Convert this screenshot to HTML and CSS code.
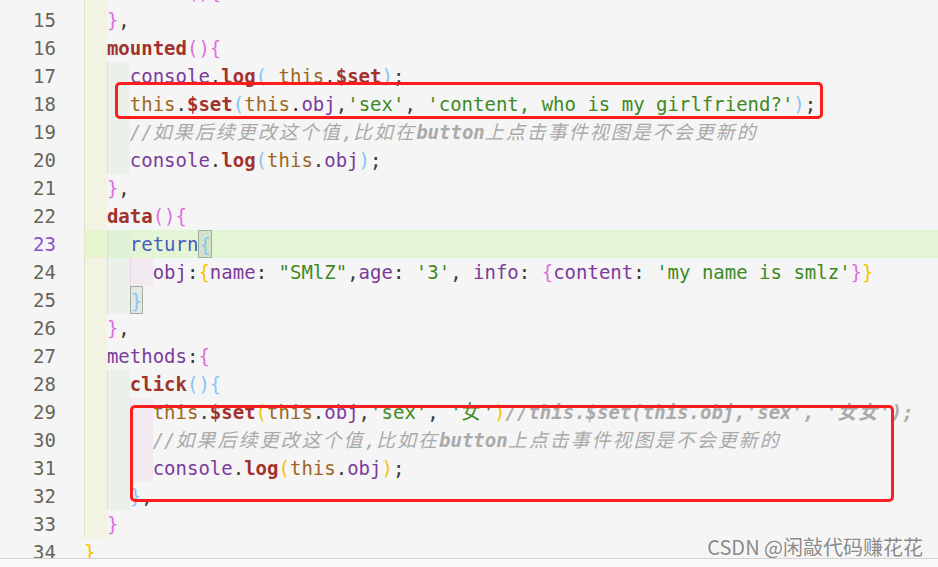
FILE: index.html
```html
<!DOCTYPE html>
<html lang="zh-CN">
<head>
    <meta charset="UTF-8">
    <meta name="viewport" content="width=device-width, initial-scale=1.0">
    <title>Vue $set</title>
    <link rel="stylesheet" href="styles.css">
</head>
<body>
    <div class="editor">
        <div class="lines">
            <div class="row"><span class="ln">14</span><div class="code"><i class="g g1"></i><span class="fn">created</span><span class="b1">(){</span></div></div>
            <div class="row"><span class="ln">15</span><div class="code"><i class="g g1"></i><span class="b1">}</span>,</div></div>
            <div class="row"><span class="ln">16</span><div class="code"><i class="g g1"></i><span class="fn">mounted</span><span class="b1">(){</span></div></div>
            <div class="row"><span class="ln">17</span><div class="code"><i class="g g1"></i><i class="g g2"></i><span class="pr">console</span>.<span class="fn">log</span><span class="b2">(</span> <span class="th">this</span>.<span class="fn">$set</span><span class="b2">)</span>;</div></div>
            <div class="row"><span class="ln">18</span><div class="code"><i class="g g1"></i><i class="g g2"></i><span class="th">this</span>.<span class="fn">$set</span><span class="b2">(</span><span class="th">this</span>.<span class="pr">obj</span>,<span class="st">'sex'</span>, <span class="st">'content, who is my girlfriend?'</span><span class="b2">)</span>;</div></div>
            <div class="row"><span class="ln">19</span><div class="code"><i class="g g1"></i><i class="g g2"></i><span class="cm">//<span class="zh">如果后续更改这个值</span>,<span class="zh">比如在</span><b>button</b><span class="zh">上点击事件视图是不会更新的</span></span></div></div>
            <div class="row"><span class="ln">20</span><div class="code"><i class="g g1"></i><i class="g g2"></i><span class="pr">console</span>.<span class="fn">log</span><span class="b2">(</span><span class="th">this</span>.<span class="pr">obj</span><span class="b2">)</span>;</div></div>
            <div class="row"><span class="ln">21</span><div class="code"><i class="g g1"></i><span class="b1">}</span>,</div></div>
            <div class="row"><span class="ln">22</span><div class="code"><i class="g g1"></i><span class="fn">data</span><span class="b1">(){</span></div></div>
            <div class="row cur"><span class="ln">23</span><div class="code"><i class="g g1"></i><i class="g g2"></i><span class="rt">return</span><span class="b2 match">{</span></div></div>
            <div class="row"><span class="ln">24</span><div class="code"><i class="g g1"></i><i class="g g2"></i><i class="g g3"></i><span class="pr">obj</span>:<span class="b3">{</span><span class="pr">name</span>: <span class="st">"SMlZ"</span>,<span class="pr">age</span>: <span class="st">'3'</span>, <span class="pr">info</span>: <span class="b1">{</span><span class="pr">content</span>: <span class="st">'my name is smlz'</span><span class="b1">}</span><span class="b3">}</span></div></div>
            <div class="row"><span class="ln">25</span><div class="code"><i class="g g1"></i><i class="g g2"></i><span class="b2 match match-end">}</span></div></div>
            <div class="row"><span class="ln">26</span><div class="code"><i class="g g1"></i><span class="b1">}</span>,</div></div>
            <div class="row"><span class="ln">27</span><div class="code"><i class="g g1"></i><span class="pr">methods</span>:<span class="b1">{</span></div></div>
            <div class="row"><span class="ln">28</span><div class="code"><i class="g g1"></i><i class="g g2"></i><span class="fn">click</span><span class="b2">(){</span></div></div>
            <div class="row"><span class="ln">29</span><div class="code"><i class="g g1"></i><i class="g g2"></i><i class="g g3"></i><span class="th">this</span>.<span class="fn">$set</span><span class="b3">(</span><span class="th">this</span>.<span class="pr">obj</span>,<span class="st">'sex'</span>, <span class="st">'<span class="zh">女</span>'</span><span class="b3">)</span><span class="cm"><b>//this.$set(this.obj,'sex', '<span class="zh">女女</span>');</b></span></div></div>
            <div class="row"><span class="ln">30</span><div class="code"><i class="g g1"></i><i class="g g2"></i><i class="g g3"></i><span class="cm">//<span class="zh">如果后续更改这个值</span>,<span class="zh">比如在</span><b>button</b><span class="zh">上点击事件视图是不会更新的</span></span></div></div>
            <div class="row"><span class="ln">31</span><div class="code"><i class="g g1"></i><i class="g g2"></i><i class="g g3"></i><span class="pr">console</span>.<span class="fn">log</span><span class="b3">(</span><span class="th">this</span>.<span class="pr">obj</span><span class="b3">)</span>;</div></div>
            <div class="row"><span class="ln">32</span><div class="code"><i class="g g1"></i><i class="g g2"></i><span class="b2">}</span>,</div></div>
            <div class="row"><span class="ln">33</span><div class="code"><i class="g g1"></i><span class="b1">}</span></div></div>
            <div class="row"><span class="ln">34</span><div class="code"><span class="b3">}</span></div></div>
        </div>

        <!-- 红框标注 -->
        <div class="mark mark-top"></div>
        <div class="mark mark-bottom"></div>

        <div class="watermark">CSDN @闲敲代码赚花花</div>
    </div>
    <div class="footer"></div>
</body>
</html>
```

FILE: styles.css
```css
body {
    margin: 0;
    background-color: #f5f5f5;
    font-family: 'DejaVu Sans Mono', 'Noto Sans CJK SC', monospace;
    font-size: 19px;
    color: #3a3a3a;
}
.editor {
    position: relative;
    height: 558px;
    overflow: hidden;
    border-bottom: 1px solid #d4d4d4;
}
.lines {
    margin-top: -22px;
}
.row {
    display: flex;
    height: 28px;
    line-height: 28px;
}
.ln {
    flex-shrink: 0;
    width: 84px;
    padding-right: 28px;
    box-sizing: border-box;
    text-align: right;
    color: #65655a;
}
.row.cur .ln {
    color: #8d52c9;
}
.code {
    flex: 1;
    white-space: pre;
}
.row.cur .code {
    background-color: #e4f5d6;
}

/* indent guides */
.g {
    display: inline-block;
    width: 2ch;
    height: 28px;
    vertical-align: top;
    box-sizing: border-box;
    border-left: 1px solid;
}
.g1 {
    background-color: rgba(240, 240, 195, 0.35);
    border-color: #e2e2cf;
}
.g2 {
    background-color: rgba(215, 235, 215, 0.35);
    border-color: #d6e2d6;
}
.g3 {
    background-color: rgba(242, 212, 236, 0.35);
    border-color: #ead8e6;
}

/* tokens */
.fn { color: #a2322c; font-weight: bold; }
.pr { color: #7b3b9b; }
.th { color: #9d6722; }
.st { color: #3f8a22; }
.rt { color: #4a5cc2; }
.cm { color: #aaaaaa; font-style: italic; }
.b1 { color: #df6cdc; }
.b2 { color: #86c5f3; }
.b3 { color: #f5c400; }
.zh {
    letter-spacing: 2px;
}
.match {
    display: inline-block;
    height: 28px;
    vertical-align: top;
    box-sizing: border-box;
    border: 1px solid #a3aba3;
    background-color: #d3e3cb;
}
.match-end {
    background-color: #e3e8e3;
}

/* red annotation boxes */
.mark {
    position: absolute;
    border: 3px solid #ff1c1c;
    border-radius: 5px;
    box-sizing: border-box;
}
.mark-top {
    left: 115px;
    top: 82px;
    width: 708px;
    height: 37px;
}
.mark-bottom {
    left: 130px;
    top: 405px;
    width: 764px;
    height: 97px;
}
.watermark {
    position: absolute;
    right: 15px;
    bottom: 1px;
    font-family: 'Noto Sans CJK SC', sans-serif;
    font-size: 20px;
    line-height: 20px;
    color: #8a8a8a;
    text-shadow: 0 0 2px #ffffff;
}
.footer {
    height: 8px;
    background-color: #f8f8f8;
}
```
